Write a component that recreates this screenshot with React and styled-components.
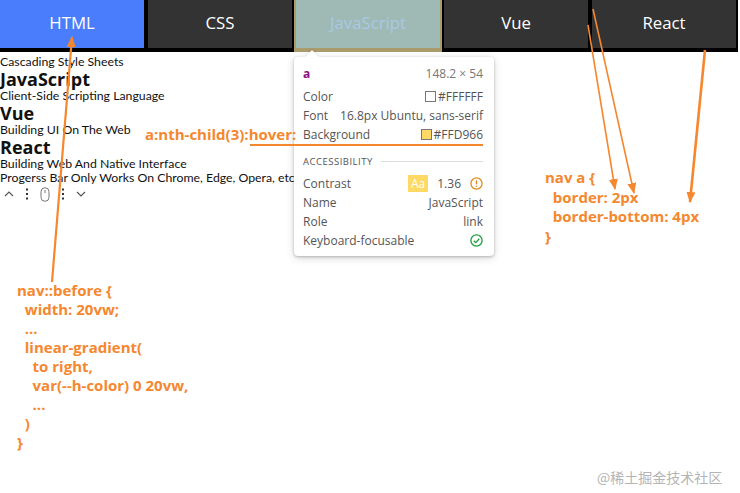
import React from "react";
import styled, { createGlobalStyle } from "styled-components";

const orange = "#f5872f";

const GlobalStyle = createGlobalStyle`
  html, body {
    margin: 0;
    padding: 0;
    background: #fff;
  }
  body {
    font-family: "Lato", "Open Sans", sans-serif;
    color: #111;
  }
`;

const tabs = [
  { label: "HTML", tone: "active" },
  { label: "CSS" },
  { label: "JavaScript", tone: "inspected" },
  { label: "Vue" },
  { label: "React" },
];

const sections = [
  { sub: "Cascading Style Sheets" },
  { title: "JavaScript", sub: "Client-Side Scripting Language" },
  { title: "Vue", sub: "Building UI On The Web" },
  { title: "React", sub: "Building Web And Native Interface" },
  { sub: "Progerss Bar Only Works On Chrome, Edge, Opera, etc" },
];

const navBeforeNote = `nav::before {
  width: 20vw;
  ...
  linear-gradient(
    to right,
    var(--h-color) 0 20vw,
    ...
  )
}`;

const navANote = `nav a {
  border: 2px
  border-bottom: 4px
}`;

const ChevronUp = () => (
  <svg width="10" height="8" viewBox="0 0 10 8">
    <path d="M1 6 L5 2 L9 6" fill="none" stroke="#555" strokeWidth="1.2" />
  </svg>
);

const ChevronDown = () => (
  <svg width="10" height="8" viewBox="0 0 10 8">
    <path d="M1 2 L5 6 L9 2" fill="none" stroke="#555" strokeWidth="1.2" />
  </svg>
);

const Kebab = () => (
  <svg width="4" height="12" viewBox="0 0 4 12">
    <rect x="1" y="0.5" width="2" height="2" fill="#333" />
    <rect x="1" y="5" width="2" height="2" fill="#333" />
    <rect x="1" y="9.5" width="2" height="2" fill="#333" />
  </svg>
);

const Mouse = () => (
  <svg width="10" height="15" viewBox="0 0 10 15">
    <rect x="1" y="0.7" width="8" height="13.6" rx="4" fill="none" stroke="#777" strokeWidth="1" />
    <line x1="5" y1="3" x2="5" y2="6" stroke="#777" strokeWidth="1" />
  </svg>
);

const WarningIcon = () => (
  <svg width="13" height="13" viewBox="0 0 13 13">
    <circle cx="6.5" cy="6.5" r="5.6" fill="none" stroke="#e08a1e" strokeWidth="1.3" />
    <line x1="6.5" y1="3.3" x2="6.5" y2="7.3" stroke="#e08a1e" strokeWidth="1.4" />
    <circle cx="6.5" cy="9.3" r="0.8" fill="#e08a1e" />
  </svg>
);

const CheckIcon = () => (
  <svg width="13" height="13" viewBox="0 0 13 13">
    <circle cx="6.5" cy="6.5" r="5.6" fill="none" stroke="#1e9e3e" strokeWidth="1.3" />
    <path d="M3.8 6.7 L5.8 8.6 L9.3 4.8" fill="none" stroke="#1e9e3e" strokeWidth="1.3" />
  </svg>
);

const App = () => {
  return (
    <Page>
      <GlobalStyle />
      <Nav>
        {tabs.map((tab) => (
          <Tab key={tab.label} href="#" $tone={tab.tone}>
            {tab.label}
          </Tab>
        ))}
      </Nav>

      <Content>
        {sections.map((s, i) => (
          <React.Fragment key={i}>
            {s.title && <Title>{s.title}</Title>}
            <Sub>{s.sub}</Sub>
          </React.Fragment>
        ))}
        <ScrollTools>
          <ChevronUp />
          <Kebab />
          <Mouse />
          <Kebab />
          <ChevronDown />
        </ScrollTools>
      </Content>

      <Tooltip>
        <TipHeader>
          <Tag>a</Tag>
          <Dim>148.2 × 54</Dim>
        </TipHeader>
        <TipRow>
          <span>Color</span>
          <Value>
            <Swatch $color="#ffffff" />
            #FFFFFF
          </Value>
        </TipRow>
        <TipRow>
          <span>Font</span>
          <Value>16.8px Ubuntu, sans-serif</Value>
        </TipRow>
        <TipRow>
          <span>Background</span>
          <Value>
            <Swatch $color="#ffd966" />
            #FFD966
          </Value>
        </TipRow>
        <SectionHead>
          <span>ACCESSIBILITY</span>
          <Rule />
        </SectionHead>
        <TipRow>
          <span>Contrast</span>
          <Value $gap={9}>
            <Badge>Aa</Badge>
            <span>1.36</span>
            <WarningIcon />
          </Value>
        </TipRow>
        <TipRow>
          <span>Name</span>
          <Value>JavaScript</Value>
        </TipRow>
        <TipRow>
          <span>Role</span>
          <Value>link</Value>
        </TipRow>
        <TipRow>
          <span>Keyboard-focusable</span>
          <Value>
            <CheckIcon />
          </Value>
        </TipRow>
      </Tooltip>

      <Arrows width="740" height="493" viewBox="0 0 740 493">
        <defs>
          <marker
            id="head"
            markerUnits="userSpaceOnUse"
            markerWidth="11"
            markerHeight="9"
            refX="10"
            refY="4.5"
            orient="auto"
          >
            <path d="M0 0 L11 4.5 L0 9 Z" fill={orange} />
          </marker>
        </defs>
        <line x1="52" y1="282" x2="72" y2="37" stroke={orange} strokeWidth="2.2" markerEnd="url(#head)" />
        <line x1="588" y1="25" x2="615" y2="189" stroke={orange} strokeWidth="1.6" markerEnd="url(#head)" />
        <line x1="593" y1="9" x2="634" y2="193" stroke={orange} strokeWidth="1.6" markerEnd="url(#head)" />
        <line x1="705" y1="50" x2="690" y2="202" stroke={orange} strokeWidth="2.6" markerEnd="url(#head)" />
        <line x1="250" y1="145" x2="483" y2="145" stroke={orange} strokeWidth="2" />
      </Arrows>

      <Note $left={145} $top={125}>a:nth-child(3):hover:</Note>
      <Note $left={17} $top={281}>{navBeforeNote}</Note>
      <Note $left={545} $top={168} $lineHeight={19.6}>{navANote}</Note>

      <Watermark>@稀土掘金技术社区</Watermark>
    </Page>
  );
};

export default App;

const Page = styled.div`
  position: relative;
  width: 740px;
  height: 493px;
  overflow: hidden;
  background: #fff;
`;

const Nav = styled.nav`
  display: flex;
  margin: -2px 0 0 -2px;
`;

const Tab = styled.a`
  box-sizing: border-box;
  flex: 0 0 148px;
  height: 54px;
  padding-bottom: 3px;
  display: flex;
  align-items: center;
  justify-content: center;
  border: 2px solid ${(p) => (p.$tone === "inspected" ? "#a99b6a" : "#000")};
  border-bottom-width: 4px;
  background: ${(p) =>
    p.$tone === "active" ? "#4a7dfb" : p.$tone === "inspected" ? "#9fbab4" : "#333"};
  color: ${(p) => (p.$tone === "inspected" ? "#a9c8e6" : "#fff")};
  font-family: "Open Sans", sans-serif;
  font-size: 16.8px;
  text-decoration: none;
`;

const Content = styled.main`
  padding-top: 3px;
`;

const Title = styled.h2`
  margin: 0;
  font-family: "Open Sans", sans-serif;
  font-size: 18px;
  font-weight: 700;
  line-height: 20px;
`;

const Sub = styled.p`
  margin: 0;
  font-size: 12.3px;
  line-height: 14px;
`;

const ScrollTools = styled.div`
  display: flex;
  align-items: center;
  gap: 11px;
  height: 16px;
  padding-left: 4px;
  margin-top: 1px;
`;

const Tooltip = styled.div`
  position: absolute;
  left: 294px;
  top: 57px;
  width: 200px;
  box-sizing: border-box;
  padding: 6px 11px 6px 9px;
  background: #fff;
  border-radius: 4px;
  box-shadow: 0 1px 3px rgba(0, 0, 0, 0.24), 0 2px 10px rgba(0, 0, 0, 0.14);
  font-family: "Open Sans", sans-serif;
  font-size: 12px;
  color: #555;

  &::before {
    content: "";
    position: absolute;
    left: 13px;
    top: -5px;
    width: 10px;
    height: 10px;
    background: #fff;
    transform: rotate(45deg);
    box-shadow: -1px -1px 2px rgba(0, 0, 0, 0.08);
  }
`;

const TipHeader = styled.div`
  position: relative;
  display: flex;
  justify-content: space-between;
  align-items: center;
  height: 20px;
  margin-bottom: 4px;
`;

const Tag = styled.span`
  color: #881280;
  font-weight: 700;
`;

const Dim = styled.span`
  color: #777;
`;

const TipRow = styled.div`
  display: flex;
  justify-content: space-between;
  align-items: center;
  height: 19px;
  line-height: 19px;
`;

const Value = styled.span`
  display: flex;
  align-items: center;
  gap: ${(p) => p.$gap || 2}px;
`;

const Swatch = styled.span`
  width: 9px;
  height: 9px;
  border: 1px solid #777;
  background: ${(p) => p.$color};
`;

const SectionHead = styled.div`
  display: flex;
  align-items: center;
  gap: 8px;
  height: 17px;
  margin: 9px 0 4px;
  font-size: 9.5px;
  letter-spacing: 0.5px;
  color: #555;
`;

const Rule = styled.span`
  flex: 1;
  height: 1px;
  background: #ddd;
`;

const Badge = styled.span`
  display: flex;
  align-items: center;
  height: 17px;
  padding: 0 3px;
  background: #ffd966;
  color: #fff;
`;

const Arrows = styled.svg`
  position: absolute;
  left: 0;
  top: 0;
  pointer-events: none;
`;

const Note = styled.pre`
  position: absolute;
  left: ${(p) => p.$left}px;
  top: ${(p) => p.$top}px;
  margin: 0;
  font-family: "Open Sans", sans-serif;
  font-size: 15px;
  font-weight: 700;
  line-height: ${(p) => p.$lineHeight || 19}px;
  color: ${orange};
  white-space: pre;
`;

const Watermark = styled.div`
  position: absolute;
  left: 597px;
  top: 467px;
  font-family: "Noto Sans CJK SC", sans-serif;
  font-size: 14px;
  color: #b4b4b4;
`;
